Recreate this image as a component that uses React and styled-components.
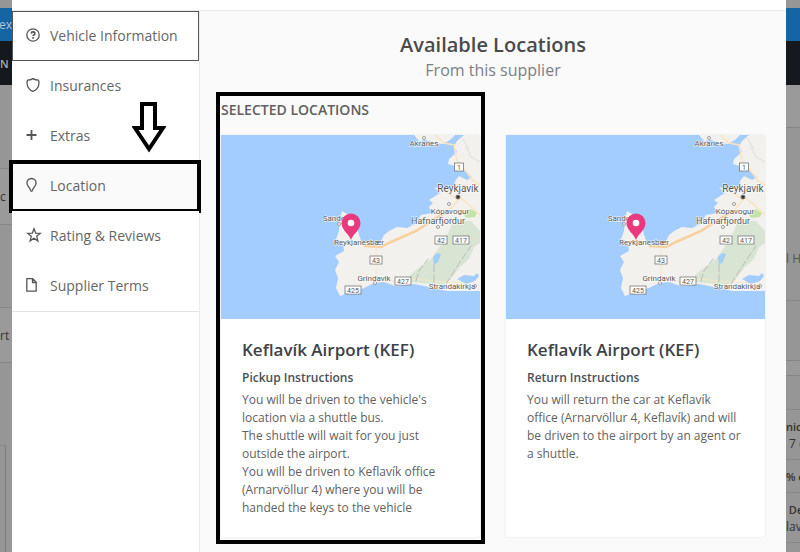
import React from "react";
import styled, { createGlobalStyle, css } from "styled-components";

const GlobalStyle = createGlobalStyle`
  * {
    box-sizing: border-box;
  }
  body {
    margin: 0;
    font-family: "Open Sans", "Noto Sans", sans-serif;
    color: #555;
    background-color: #969696;
  }
  h1, h2, h3, h4, p {
    margin: 0;
  }
`;

const Screen = styled.div`
  display: flex;
  height: 100vh;
  overflow: hidden;
`;

const Edge = styled.div`
  display: flex;
  flex-direction: column;
  flex-shrink: 0;
  width: ${(props) => props.$width}px;
  overflow: hidden;
  background-color: #969696;
`;

const Strip = styled.div`
  display: flex;
  flex-direction: column;
  justify-content: center;
  align-items: ${(props) => (props.$end ? "flex-end" : "flex-start")};
  flex-shrink: 0;
  height: ${(props) => props.$height}px;
  font-size: 12px;
  line-height: 17px;
  white-space: nowrap;
  color: ${(props) => props.$color || "#333"};
  background-color: ${(props) => props.$bg || "transparent"};
  ${(props) =>
    props.$line &&
    css`
      border-bottom: 1px solid #868686;
    `}
  strong {
    font-size: 11px;
    font-weight: 600;
  }
`;

const PanelEdge = styled.div`
  flex: 1;
  margin-top: 82px;
  width: 6px;
  border-top: 1px solid #868686;
  border-right: 1px solid #7c7c7c;
`;

const Modal = styled.main`
  display: flex;
  flex-direction: column;
  flex: 1;
  min-width: 0;
  background-color: #fff;
`;

const ModalHeader = styled.div`
  flex-shrink: 0;
  height: 11px;
  border-bottom: 1px solid #e9e9e9;
`;

const ModalBody = styled.div`
  display: flex;
  flex: 1;
  min-height: 0;
`;

const Sidebar = styled.nav`
  flex-shrink: 0;
  width: 188px;
  border-right: 1px solid #ebebeb;
`;

const NavList = styled.ul`
  margin: 0;
  padding: 0;
  list-style: none;
  border-bottom: 1px solid #e4e4e4;
`;

const NavItem = styled.li`
  position: relative;
`;

const NavButton = styled.button`
  display: flex;
  align-items: center;
  width: 100%;
  height: 50px;
  padding: 0 13px 2px;
  border: 1px solid ${(props) => (props.$focused ? "#555" : "transparent")};
  background-color: ${(props) => (props.$active ? "#fafafa" : "#fff")};
  font-family: inherit;
  font-size: 14px;
  color: #666;
  text-align: left;
  cursor: pointer;
  svg {
    flex-shrink: 0;
    width: 16px;
    height: 16px;
    margin-right: 8px;
  }
`;

const Marker = styled.span`
  position: absolute;
  inset: -1px -2px -2px -3px;
  border: 4px solid #000;
  pointer-events: none;
`;

const Arrow = styled.svg`
  position: absolute;
  right: 33px;
  bottom: 58px;
  width: 34px;
  height: 52px;
  pointer-events: none;
`;

const Content = styled.section`
  flex: 1;
  min-width: 0;
  padding: 20px 21px 0;
  background-color: #fafafa;
`;

const Title = styled.h1`
  font-size: 20px;
  line-height: 28px;
  font-weight: 600;
  text-align: center;
  color: #4a4a4a;
`;

const Subtitle = styled.p`
  font-size: 16px;
  line-height: 22px;
  text-align: center;
  color: #7b8088;
`;

const Locations = styled.div`
  display: grid;
  grid-template-columns: 1fr 1fr;
  grid-template-rows: auto 1fr;
  column-gap: 26px;
  margin-top: 18px;
`;

const LocationColumn = styled.div`
  position: relative;
  display: grid;
  grid-row: 1 / 3;
  grid-template-rows: subgrid;
`;

const GroupTitle = styled.h2`
  height: 36px;
  font-size: 14px;
  line-height: 22px;
  font-weight: 600;
  text-transform: uppercase;
  color: #606060;
`;

const Highlight = styled.span`
  position: absolute;
  inset: -7px -5px -7px -5px;
  border: 4px solid #000;
  pointer-events: none;
`;

const Card = styled.article`
  grid-row: 2;
  background-color: #fff;
  border-radius: 2px;
  box-shadow: 0 0 2px rgba(0, 0, 0, 0.12);
`;

const CardBody = styled.div`
  padding: 18px 21px 20px;
`;

const CardTitle = styled.h3`
  font-size: 17px;
  line-height: 26px;
  font-weight: 600;
  color: #3d4248;
`;

const CardSubtitle = styled.h4`
  margin-top: 6px;
  font-size: 12px;
  line-height: 18px;
  font-weight: 600;
  color: #4a5056;
`;

const Instructions = styled.p`
  margin-top: 4px;
  font-size: 12px;
  line-height: 18px;
  color: #626262;
`;

const MapSvg = styled.svg`
  display: block;
  width: 100%;
  background-color: #a3ccff;
  text {
    font-family: Roboto, sans-serif;
    fill: #555;
    stroke: #fff;
    stroke-width: 1px;
    paint-order: stroke;
  }
`;

const strokeProps = {
  fill: "none",
  stroke: "#555",
  strokeWidth: 1.3,
  strokeLinejoin: "round",
};

const icons = {
  question: (
    <svg viewBox="0 0 16 16" {...strokeProps}>
      <circle cx="7" cy="8" r="6.2" />
      <path d="M5.2 6.6C5.3 5.4 6 4.9 7 4.9s1.9.6 1.9 1.6c0 1.2-1.8 1.3-1.8 2.6" strokeWidth="1.6" />
      <path d="M7.1 10.1v1.6" strokeWidth="1.6" />
    </svg>
  ),
  shield: (
    <svg viewBox="0 0 16 16" {...strokeProps}>
      <path d="M7 1.6c1.7 1.2 3.6 1.6 5.4 1.6.6 1 .7 2.3.5 3.8-.5 3.6-2.6 6.2-5.9 7.4C3.7 13.2 1.6 10.6 1.1 7 .9 5.5 1 4.2 1.6 3.2 3.4 3.2 5.3 2.8 7 1.6z" />
    </svg>
  ),
  plus: (
    <svg viewBox="0 0 16 16" {...strokeProps} strokeWidth="1.8">
      <path d="M.5 8h10M5.5 3v10" />
    </svg>
  ),
  pin: (
    <svg viewBox="0 0 16 16" {...strokeProps}>
      <path d="M5.5 1.5C2.8 1.5.9 3.5.9 6c0 2.900 3 4.700 4 8.100h1.200c1-3.400 4-5.200 4-8.100 0-2.500-1.900-4.500-4.600-4.500z" />
    </svg>
  ),
  star: (
    <svg viewBox="0 0 16 16" {...strokeProps} strokeLinejoin="miter">
      <path d="M8 1.8l1.7 4.4 4.6.2-3.6 2.9 1.2 4.6L8 11.3l-3.9 2.6 1.2-4.6L1.7 6.4l4.6-.2z" />
    </svg>
  ),
  file: (
    <svg viewBox="0 0 16 16" {...strokeProps}>
      <path d="M.8 1.7h6l3.400 3.500v9H.8zM6.500 1.700v3.800h3.700" />
    </svg>
  ),
};

const navItems = [
  { id: "vehicle", label: "Vehicle Information", icon: icons.question, focused: true },
  { id: "insurances", label: "Insurances", icon: icons.shield },
  { id: "extras", label: "Extras", icon: icons.plus },
  { id: "location", label: "Location", icon: icons.pin, active: true },
  { id: "reviews", label: "Rating & Reviews", icon: icons.star },
  { id: "terms", label: "Supplier Terms", icon: icons.file },
];

const places = [
  { name: "Akranes", x: 203, y: 11, size: 8 },
  { name: "Reykjavík", x: 237, y: 57, size: 10 },
  { name: "Kópavogur", x: 229, y: 79, size: 8 },
  { name: "Hafnarfjordur", x: 217, y: 89, size: 9 },
  { name: "Sandg", x: 113, y: 86, size: 8 },
  { name: "Reykjanesbær", x: 138, y: 110, size: 8 },
  { name: "Grindavik", x: 153, y: 146, size: 8 },
  { name: "Strandakirkja", x: 231, y: 154, size: 8 },
];

const roadSigns = [
  { label: "1", x: 238, y: 32, width: 9 },
  { label: "42", x: 220, y: 105, width: 12 },
  { label: "417", x: 240, y: 105, width: 16 },
  { label: "43", x: 155, y: 125, width: 12 },
  { label: "427", x: 182, y: 146, width: 16 },
  { label: "425", x: 132, y: 155, width: 16 },
];

const towns = [
  [203, 3],
  [228, 69],
  [217, 92],
  [118, 89],
  [154, 148],
  [254, 151],
];

function LocationMap() {
  return (
    <MapSvg viewBox="0 0 259 184" role="img" aria-label="Map of the Reykjanes peninsula">
      <path
        fill="#f3f1ed"
        d="M259 0H243L236 6 233 11 236 17 228 24 227 29 237 32 244 36 251 42 246 45 238 41 234 46 235 51 222 55 213 52 219 58 208 65 212 68 208 72 211 78 200 80 194 89 186 93 176 92 168 96 163 100 160 106 151 111 141 108 138 100 136 90 131 80 126 79 121 76 119 86 118 96 115 104 122 107 123 116 114 121 118 127 114 135 117 143 115 153 119 161 130 157 143 153 153 148 163 147 174 151 193 149 213 153 226 156 259 156z"
      />
      <path fill="#f3f1ed" d="M193 0h41l-5 5-7 4-8-1-9-3-7 1z" />
      <path
        fill="#d9e5d3"
        d="M225 103L232 86 250 86 259 96 259 108 253 112 248 124 239 132 229 145 221 150 190 147 189 140 199 132 210 124z"
      />
      <path fill="#c3e3ab" d="M242 78l8-4 6 4-2 4-9 1z" />
      <g fill="none" strokeLinecap="round">
        <path stroke="#fbe3bb" strokeWidth="1.5" d="M214 0l9 8 10 2 3 16 9 10 7 10 7 4M235 60l11 8 13 12M222 55l15 10-12 14" />
        <path stroke="#f8cf9b" strokeWidth="2.5" d="M144 111l16 1 10-5 25-11 17-11 15-9" />
        <path stroke="#f6e6c8" d="M155 112v34M163 147l30-3 30 3 30 1" />
        <path stroke="#bbb" strokeDasharray="7 3" d="M225 149l12-19 13-19M195 146l3-10 9-12M213 130v18" />
        <path stroke="#ddd" d="M248 108h11M245 12l5 10 9 5M242 4l6 10" />
      </g>
      <path fill="#a3ccff" d="M212 122l4-4 4 1-3 8-4 3zM236 144l7-4 10 1 3-3 2 3-4 5-9 3z" />
      <g fill="#fff" stroke="#999">
        {towns.map(([cx, cy]) => (
          <circle key={`${cx}-${cy}`} cx={cx} cy={cy} r="1.5" />
        ))}
      </g>
      <circle cx="237" cy="62" r="2" fill="#333" stroke="#777" />
      {places.map((place) => (
        <text key={place.name} x={place.x} y={place.y} fontSize={place.size} textAnchor="middle">
          {place.name}
        </text>
      ))}
      {roadSigns.map((sign) => (
        <g key={sign.label}>
          <rect
            x={sign.x - sign.width / 2}
            y={sign.y - 4}
            width={sign.width}
            height="8"
            fill="#fff"
            stroke="#777"
            strokeWidth="0.8"
          />
          <text x={sign.x} y={sign.y + 2.5} fontSize="7" textAnchor="middle">
            {sign.label}
          </text>
        </g>
      ))}
      <path
        fill="#e93a7d"
        d="M130 105c-2-6-9.5-10-9.5-17a9.5 9.5 0 0 1 19 0c0 7-7.5 11-9.5 17z"
      />
      <circle cx="130" cy="88" r="3.3" fill="#fff" />
    </MapSvg>
  );
}

function LocationCard({ title, subtitle, lines }) {
  return (
    <Card>
      <LocationMap />
      <CardBody>
        <CardTitle>{title}</CardTitle>
        <CardSubtitle>{subtitle}</CardSubtitle>
        <Instructions>
          {lines.map((line, index) => (
            <React.Fragment key={line}>
              {index > 0 && <br />}
              {line}
            </React.Fragment>
          ))}
        </Instructions>
      </CardBody>
    </Card>
  );
}

function App() {
  return (
    <>
      <GlobalStyle />
      <Screen>
        <Edge $width={12} aria-hidden="true">
          <Strip $height={8} />
          <Strip $height={33} $end $bg="#1565a5" $color="#b4c4d4">t ex</Strip>
          <Strip $height={44} $bg="#15191d" $color="#aaa">
            <strong>N</strong>
          </Strip>
          <Strip $height={84} $line />
          <Strip $height={56} $line $bg="#9a9a9a">c</Strip>
          <Strip $height={83} $line />
          <Strip $height={55} $line $bg="#9a9a9a">rt</Strip>
          <PanelEdge />
        </Edge>
        <Modal>
          <ModalHeader />
          <ModalBody>
            <Sidebar>
              <NavList>
                {navItems.map((item) => (
                  <NavItem key={item.id}>
                    <NavButton type="button" $focused={item.focused} $active={item.active}>
                      {item.icon}
                      {item.label}
                    </NavButton>
                    {item.active && (
                      <>
                        <Marker />
                        <Arrow viewBox="0 0 34 52">
                          <path
                            d="M10 3h13v24h8L17 48 3 27h7z"
                            fill="#fff"
                            stroke="#000"
                            strokeWidth="4"
                          />
                        </Arrow>
                      </>
                    )}
                  </NavItem>
                ))}
              </NavList>
            </Sidebar>
            <Content>
              <Title>Available Locations</Title>
              <Subtitle>From this supplier</Subtitle>
              <Locations>
                <LocationColumn>
                  <GroupTitle>Selected Locations</GroupTitle>
                  <LocationCard
                    title="Keflavík Airport (KEF)"
                    subtitle="Pickup Instructions"
                    lines={[
                      "You will be driven to the vehicle's location via a shuttle bus.",
                      "The shuttle will wait for you just outside the airport.",
                      "You will be driven to Keflavík office (Arnarvöllur 4) where you will be handed the keys to the vehicle",
                    ]}
                  />
                  <Highlight />
                </LocationColumn>
                <LocationColumn>
                  <LocationCard
                    title="Keflavík Airport (KEF)"
                    subtitle="Return Instructions"
                    lines={[
                      "You will return the car at Keflavík office (Arnarvöllur 4, Keflavík) and will be driven to the airport by an agent or a shuttle.",
                    ]}
                  />
                </LocationColumn>
              </Locations>
            </Content>
          </ModalBody>
        </Modal>
        <Edge $width={14} aria-hidden="true">
          <Strip $height={8} />
          <Strip $height={33} $bg="#1565a5" />
          <Strip $height={44} $bg="#15191d" />
          <Strip $height={43} $line $bg="#9a9a9a" />
          <Strip $height={88} />
          <Strip $height={85} $line $color="#555">l Ha</Strip>
          <Strip $height={60} $line />
          <Strip $height={15} $line $bg="#999" />
          <Strip $height={34} $line />
          <Strip $height={50} $line>
            <strong>nicl</strong>
            <span>&nbsp;7 d</span>
          </Strip>
          <Strip $height={33} $line>
            <strong>% o</strong>
          </Strip>
          <Strip $height={50} $line>
            <strong>&nbsp;De</strong>
            <span>lav</span>
          </Strip>
        </Edge>
      </Screen>
    </>
  );
}

export default App;
